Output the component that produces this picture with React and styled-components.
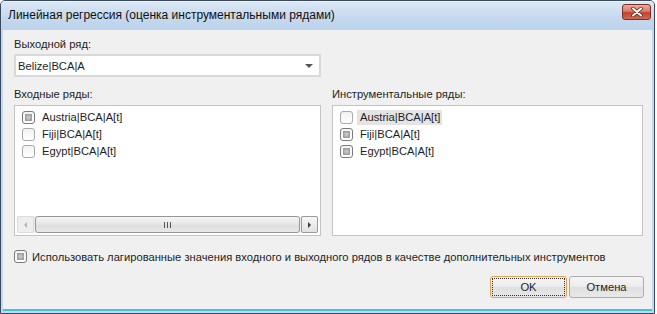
import styled, { createGlobalStyle } from "styled-components";

const GlobalStyle = createGlobalStyle`
    html, body {
        margin: 0;
        padding: 0;
        background: #ffffff;
    }
    body {
        font-family: "Liberation Sans", Arial, sans-serif;
        font-size: 11.2px;
        color: #1e1e1e;
    }
`

const Window = styled.div`
    width: 653px;
    height: 312px;
    border: 1px solid #3a4a5e;
    border-radius: 5px 5px 0 0;
    background: #c3d7ee;
    display: flex;
    flex-direction: column;
    overflow: hidden;
`
const TitleBar = styled.div`
    height: 29px;
    display: flex;
    align-items: center;
    justify-content: space-between;
    padding: 0 3px 0 7px;
    background: linear-gradient(#dbe7f4, #c4d8ee 60%, #bcd3eb);
    border-top: 1px solid #eef4fb;
    box-sizing: border-box;
`
const TitleText = styled.div`
    font-size: 12px;
    color: #101010;
    margin-top: -2px;
`
const CloseButton = styled.div`
    width: 29px;
    height: 16px;
    margin-top: -8px;
    box-sizing: border-box;
    border: 1px solid #7a2f25;
    border-radius: 3px;
    background: linear-gradient(#eba99c, #dc7a69 45%, #c6402c 55%, #d36a52);
    display: flex;
    align-items: center;
    justify-content: center;
`
const Body = styled.div`
    flex: 1;
    margin: 0 2px 2px 2px;
    background: #f0f0f0;
    border-bottom: 2px solid #42bfe4;
    padding: 7px 8px 0 11px;
    display: flex;
    flex-direction: column;
`
const Label = styled.div`
    height: 15px;
    line-height: 15px;
    white-space: nowrap;
`
const Combo = styled.div`
    width: 307px;
    height: 23px;
    margin-top: 2px;
    box-sizing: border-box;
    border: 2px solid #d9d9d9;
    background: #ffffff;
    display: flex;
    align-items: center;
    justify-content: space-between;
    padding: 0 6px 0 2px;
`
const ComboArrow = styled.span`
    width: 0;
    height: 0;
    border-left: 4px solid transparent;
    border-right: 4px solid transparent;
    border-top: 4px solid #555555;
`
const Columns = styled.div`
    display: grid;
    grid-template-columns: 307px 311px;
    column-gap: 11px;
    margin-top: 10px;
`
const Column = styled.div`
    display: flex;
    flex-direction: column;
`
const ListBox = styled.div`
    height: 131px;
    margin-top: 3px;
    box-sizing: border-box;
    border: 1px solid #c4c4c4;
    background: #ffffff;
    display: flex;
    flex-direction: column;
    justify-content: space-between;
    padding: 3px 1px 1px 1px;
`
const Items = styled.div`
    display: flex;
    flex-direction: column;
`
const Item = styled.div`
    height: 17px;
    display: flex;
    align-items: center;
    padding-left: 6px;
`
const ItemText = styled.span`
    margin-left: 4px;
    padding: 0 2px 0 3px;
    line-height: 15px;
    background: ${p => (p.$selected ? "#e4e4e4" : "transparent")};
`
const Box = styled.span`
    width: 13px;
    height: 13px;
    box-sizing: border-box;
    border: 1px solid ${p => (p.$checked ? "#7b7b7b" : "#a9a9a9")};
    border-radius: 3px;
    background: linear-gradient(#f2f2f2, #ffffff);
    display: flex;
    align-items: center;
    justify-content: center;
    flex-shrink: 0;
    &::after {
        content: "";
        display: ${p => (p.$checked ? "block" : "none")};
        width: 7px;
        height: 7px;
        border-radius: 1px;
        background: radial-gradient(circle, #c4c4c4 20%, #8c8c8c 90%);
    }
`
const ScrollBar = styled.div`
    height: 17px;
    margin: 0 1px 1px 1px;
    display: flex;
    gap: 1px;
    background: #f0f0f0;
`
const ScrollButton = styled.div`
    width: 17px;
    box-sizing: border-box;
    border: 1px solid ${p => (p.$active ? "#9a9a9a" : "#dcdcdc")};
    border-radius: 2px;
    background: ${p => (p.$active ? "linear-gradient(#f6f6f6, #e2e2e2)" : "#eeeeee")};
    display: flex;
    align-items: center;
    justify-content: center;
`
const Thumb = styled.div`
    flex: 1;
    box-sizing: border-box;
    border: 1px solid #979797;
    border-radius: 3px;
    background: linear-gradient(#f5f5f5, #e6e6e6 50%, #dcdcdc 51%, #e8e8e8);
    display: flex;
    align-items: center;
    justify-content: center;
    gap: 2px;
`
const Grip = styled.span`
    width: 1px;
    height: 6px;
    background: #555555;
`
const Arrow = styled.span`
    width: 0;
    height: 0;
    border-top: 3px solid transparent;
    border-bottom: 3px solid transparent;
    ${p => (p.$dir === "left"
        ? `border-right: 3px solid ${p.$color};`
        : `border-left: 3px solid ${p.$color};`)}
`
const OptionRow = styled.div`
    display: flex;
    align-items: center;
    gap: 5px;
    height: 15px;
    margin-top: 13px;
    white-space: nowrap;
`
const Buttons = styled.div`
    display: flex;
    justify-content: flex-end;
    gap: 2px;
    margin-top: 12px;
`
const Button = styled.div`
    width: ${p => p.$width}px;
    height: 22px;
    box-sizing: border-box;
    border: 1px solid ${p => (p.$focused ? "#e2a24f" : "#acacac")};
    border-radius: 3px;
    background: linear-gradient(#f6f6f6, #ebebeb 50%, #dfdfdf 51%, #e9e9e9);
    display: flex;
    align-items: center;
    justify-content: center;
    padding: 1px;
`
const ButtonInner = styled.div`
    flex: 1;
    align-self: stretch;
    display: flex;
    align-items: center;
    justify-content: center;
    border: 1px dotted ${p => (p.$focused ? "#333333" : "transparent")};
`

const inputs = [
    { name: "Austria|BCA|A[t]", checked: true },
    { name: "Fiji|BCA|A[t]", checked: false },
    { name: "Egypt|BCA|A[t]", checked: false },
]
const instruments = [
    { name: "Austria|BCA|A[t]", checked: false, selected: true },
    { name: "Fiji|BCA|A[t]", checked: true },
    { name: "Egypt|BCA|A[t]", checked: true },
]

const App = () => {
    return (
        <>
            <GlobalStyle />
            <Window>
                <TitleBar>
                    <TitleText>Линейная регрессия (оценка инструментальными рядами)</TitleText>
                    <CloseButton>
                        <svg width="12" height="10" viewBox="0 0 12 10">
                            <path d="M2 1.5 L10 8.5 M10 1.5 L2 8.5" stroke="#5a2a22" strokeWidth="3.6" strokeLinecap="round" />
                            <path d="M2 1.5 L10 8.5 M10 1.5 L2 8.5" stroke="#ffffff" strokeWidth="2" strokeLinecap="round" />
                        </svg>
                    </CloseButton>
                </TitleBar>
                <Body>
                    <Label>Выходной ряд:</Label>
                    <Combo>
                        <span>Belize|BCA|A</span>
                        <ComboArrow />
                    </Combo>
                    <Columns>
                        <Column>
                            <Label>Входные ряды:</Label>
                            <ListBox>
                                <Items>
                                    {inputs.map(it => (
                                        <Item key={it.name}>
                                            <Box $checked={it.checked} />
                                            <ItemText>{it.name}</ItemText>
                                        </Item>
                                    ))}
                                </Items>
                                <ScrollBar>
                                    <ScrollButton>
                                        <Arrow $dir="left" $color="#b5b5b5" />
                                    </ScrollButton>
                                    <Thumb>
                                        <Grip />
                                        <Grip />
                                        <Grip />
                                    </Thumb>
                                    <ScrollButton $active>
                                        <Arrow $dir="right" $color="#3a3a3a" />
                                    </ScrollButton>
                                </ScrollBar>
                            </ListBox>
                        </Column>
                        <Column>
                            <Label>Инструментальные ряды:</Label>
                            <ListBox>
                                <Items>
                                    {instruments.map(it => (
                                        <Item key={it.name}>
                                            <Box $checked={it.checked} />
                                            <ItemText $selected={it.selected}>{it.name}</ItemText>
                                        </Item>
                                    ))}
                                </Items>
                            </ListBox>
                        </Column>
                    </Columns>
                    <OptionRow>
                        <Box $checked />
                        <span>Использовать лагированные значения входного и выходного рядов в качестве дополнительных инструментов</span>
                    </OptionRow>
                    <Buttons>
                        <Button $width={77} $focused>
                            <ButtonInner $focused>OK</ButtonInner>
                        </Button>
                        <Button $width={75}>
                            <ButtonInner>Отмена</ButtonInner>
                        </Button>
                    </Buttons>
                </Body>
            </Window>
        </>
    )
}

export default App
